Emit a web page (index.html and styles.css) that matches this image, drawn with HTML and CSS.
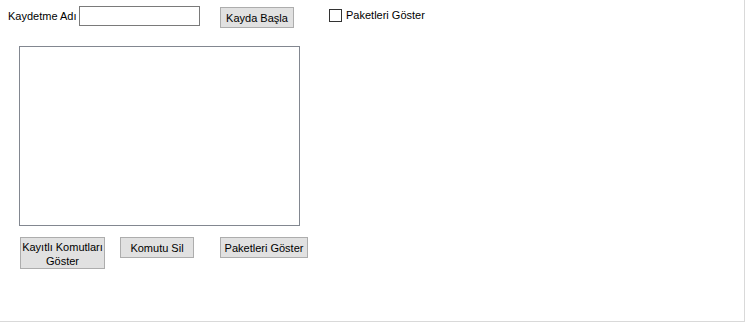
FILE: index.html
```html
<!DOCTYPE html>
<html lang="tr">
<head>
<meta charset="utf-8">
<title>Kaydetme</title>
<link rel="stylesheet" href="styles.css">
</head>
<body>
<div class="window">
  <div class="top-row">
    <span class="label">Kaydetme Adı</span>
    <input class="textbox" type="text">
    <button class="btn btn-start">Kayda Başla</button>
    <label class="check">
      <span class="check-box"></span>
      <span class="check-text">Paketleri Göster</span>
    </label>
  </div>
  <div class="listbox"></div>
  <div class="bottom-row">
    <button class="btn btn-saved">Kayıtlı Komutları Göster</button>
    <button class="btn btn-delete">Komutu Sil</button>
    <button class="btn btn-packets">Paketleri Göster</button>
  </div>
</div>
</body>
</html>
```
FILE: styles.css
```css
html, body {
  margin: 0;
  padding: 0;
  background: #ffffff;
}
body {
  font-family: "Liberation Sans", Arial, sans-serif;
  font-size: 11px;
  color: #000000;
}
.window {
  box-sizing: border-box;
  width: 745px;
  height: 322px;
  border-right: 1px solid #d9d9d9;
  border-bottom: 1px solid #d9d9d9;
  display: flex;
  flex-direction: column;
}
.top-row {
  display: flex;
  align-items: flex-start;
  padding: 6px 0 0 8px;
  height: 22px;
}
.label {
  width: 71px;
  line-height: 20px;
  white-space: nowrap;
}
.textbox {
  box-sizing: border-box;
  width: 121px;
  height: 20px;
  margin: 0;
  padding: 0 2px;
  border: 1px solid #7a7a7a;
  font: inherit;
  outline: none;
}
.btn {
  box-sizing: border-box;
  margin: 0;
  padding: 0;
  background: #e1e1e1;
  border: 1px solid #adadad;
  border-radius: 0;
  font-family: "Liberation Sans", Arial, sans-serif;
  font-size: 11px;
  color: #000000;
  line-height: 14px;
  text-align: center;
}
.btn-start {
  width: 74px;
  height: 21px;
  margin: 1px 0 0 20px;
}
.check {
  display: flex;
  align-items: center;
  margin: 2px 0 0 35px;
  height: 14px;
}
.check-box {
  box-sizing: border-box;
  width: 13px;
  height: 13px;
  border: 1px solid #333333;
  background: #ffffff;
}
.check-text {
  margin-left: 4px;
  line-height: 14px;
}
.listbox {
  box-sizing: border-box;
  width: 281px;
  height: 180px;
  margin: 18px 0 0 19px;
  border: 1px solid #828790;
  background: #ffffff;
}
.bottom-row {
  display: flex;
  align-items: flex-start;
  margin: 11px 0 0 20px;
}
.btn-saved {
  width: 85px;
  height: 32px;
  padding-top: 1px;
}
.btn-delete {
  width: 74px;
  height: 21px;
  margin-left: 15px;
}
.btn-packets {
  width: 88px;
  height: 21px;
  margin-left: 26px;
  white-space: nowrap;
}
```
